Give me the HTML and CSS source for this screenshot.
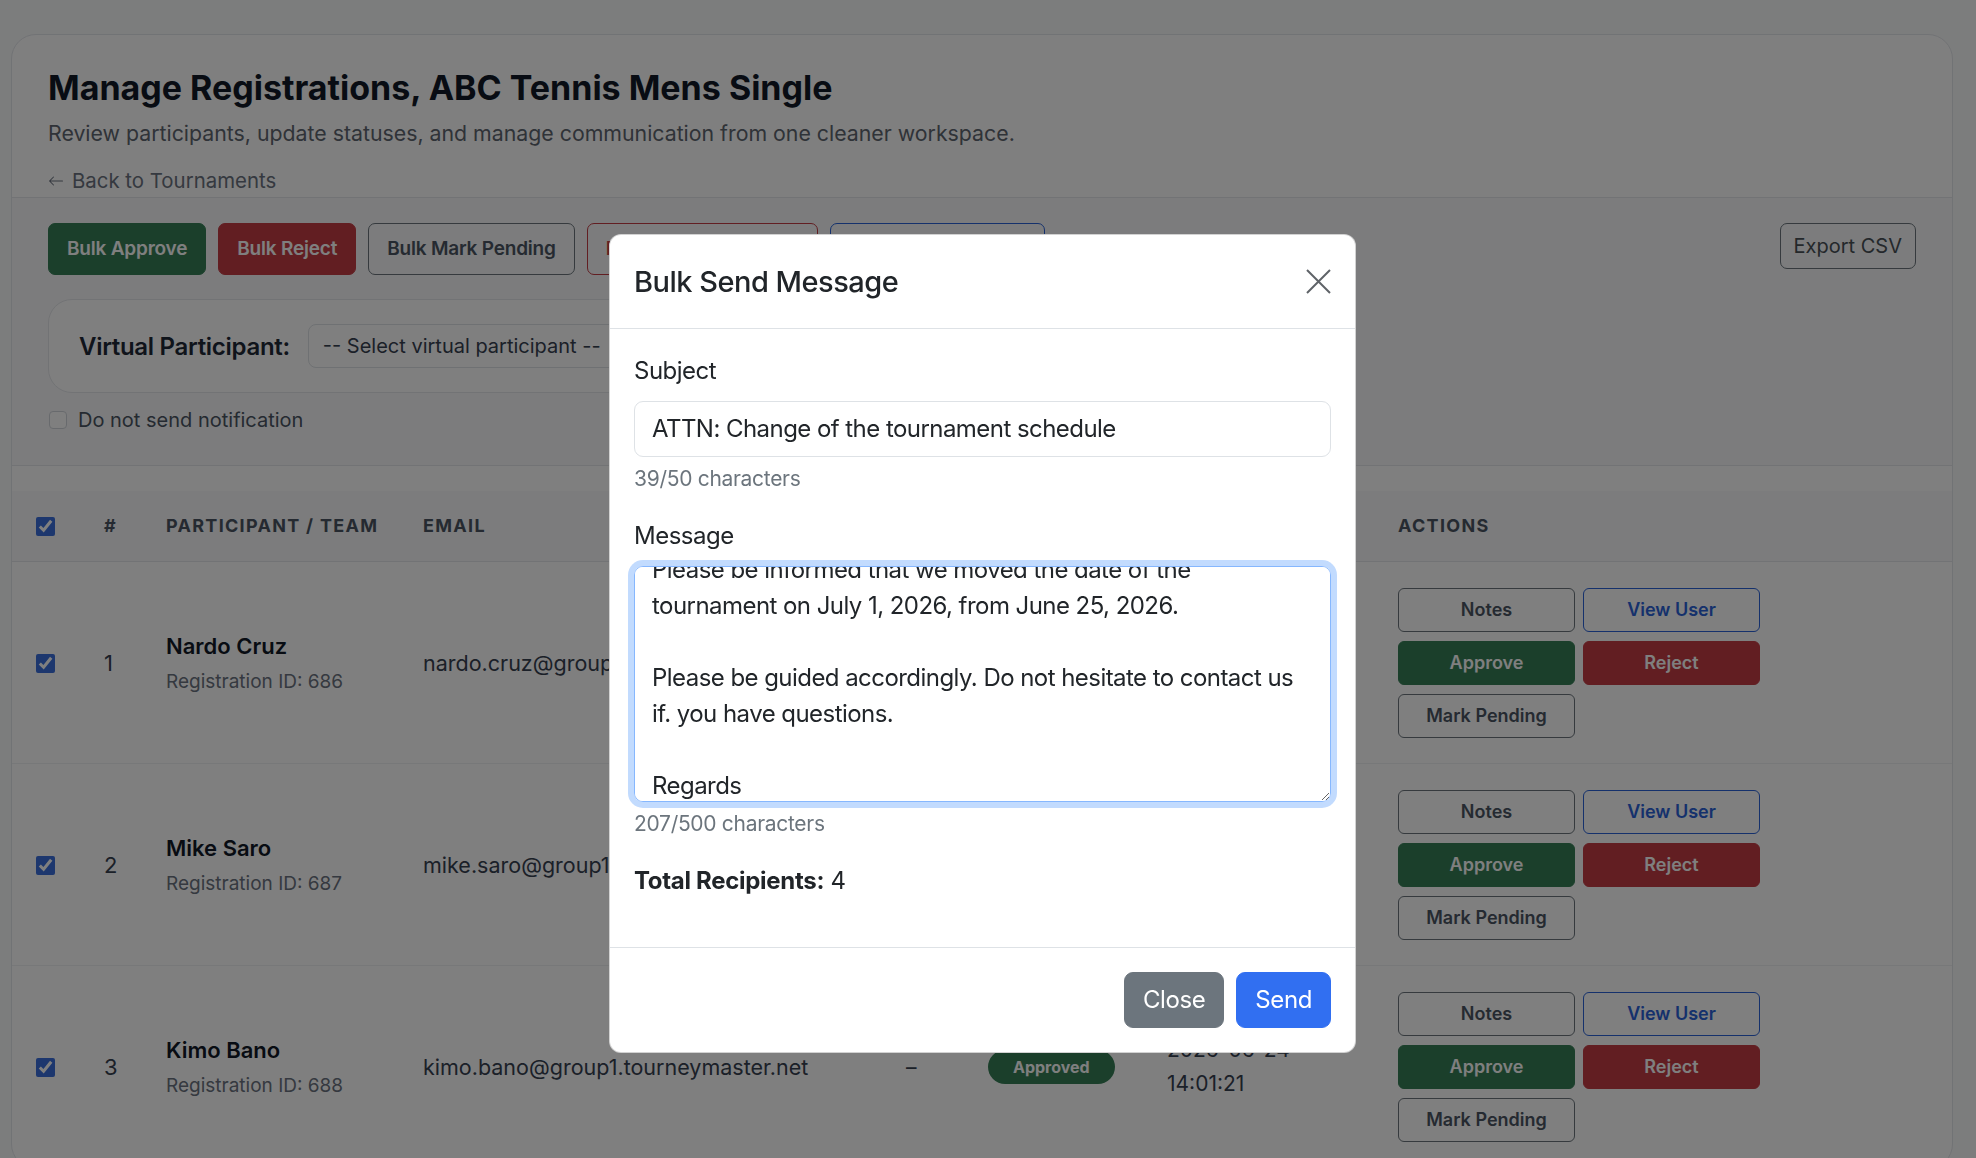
FILE: index.html
```html
<!DOCTYPE html>
<html>
<head>
  <meta charset="utf-8">
  <title>Manage Registrations</title>
  <link rel="stylesheet" href="styles.css">
</head>
<body>
  <div class="card">
    <header class="page-header">
      <h1>Manage Registrations, ABC Tennis Mens Single</h1>
      <p class="lead">Review participants, update statuses, and manage communication from one cleaner workspace.</p>
      <a class="back-link" href="#">
        <svg viewBox="0 0 16 16" fill="currentColor"><path fill-rule="evenodd" d="M15 8a.5.5 0 0 0-.5-.5H2.707l3.147-3.146a.5.5 0 1 0-.708-.708l-4 4a.5.5 0 0 0 0 .708l4 4a.5.5 0 0 0 .708-.708L2.707 8.5H14.5A.5.5 0 0 0 15 8z"/></svg>
        Back to Tournaments
      </a>
    </header>

    <section class="toolbar">
      <div class="bulk-row">
        <div class="bulk-actions">
          <button class="btn btn-success">Bulk Approve</button>
          <button class="btn btn-danger">Bulk Reject</button>
          <button class="btn btn-outline-secondary">Bulk Mark Pending</button>
          <button class="btn btn-outline-danger">Bulk Mark Withdrawn</button>
          <button class="btn btn-outline-primary">Bulk Send Message</button>
        </div>
        <button class="btn btn-export">Export CSV</button>
      </div>
      <div class="virtual-box">
        <label class="virtual-label">Virtual Participant:</label>
        <select class="virtual-select">
          <option>-- Select virtual participant --</option>
        </select>
        <button class="btn btn-outline-primary">Add</button>
      </div>
      <label class="notify">
        <input type="checkbox" class="check-plain">
        Do not send notification
      </label>
    </section>

    <div class="table-wrap">
      <table>
        <colgroup>
          <col style="width: 68px">
          <col style="width: 62px">
          <col style="width: 257px">
          <col style="width: 483px">
          <col style="width: 82px">
          <col style="width: 179px">
          <col style="width: 231px">
          <col>
        </colgroup>
        <thead>
          <tr>
            <th><input type="checkbox" class="check" checked></th>
            <th>#</th>
            <th>Participant / Team</th>
            <th>Email</th>
            <th>Seed</th>
            <th>Status</th>
            <th>Registered</th>
            <th>Actions</th>
          </tr>
        </thead>
        <tbody>
          <tr>
            <td><input type="checkbox" class="check" checked></td>
            <td class="num">1</td>
            <td>
              <div class="name">Nardo Cruz</div>
              <div class="reg-id">Registration ID: 686</div>
            </td>
            <td class="email">nardo.cruz@group1.tourneymaster.net</td>
            <td>–</td>
            <td><span class="badge">Approved</span></td>
            <td class="date"><span>2026-06-24</span><span>13:58:02</span></td>
            <td>
              <div class="actions">
                <button class="btn btn-sm btn-outline-secondary">Notes</button>
                <button class="btn btn-sm btn-outline-primary">View User</button>
                <button class="btn btn-sm btn-success">Approve</button>
                <button class="btn btn-sm btn-danger">Reject</button>
                <button class="btn btn-sm btn-outline-secondary">Mark Pending</button>
              </div>
            </td>
          </tr>
          <tr>
            <td><input type="checkbox" class="check" checked></td>
            <td class="num">2</td>
            <td>
              <div class="name">Mike Saro</div>
              <div class="reg-id">Registration ID: 687</div>
            </td>
            <td class="email">mike.saro@group1.tourneymaster.net</td>
            <td>–</td>
            <td><span class="badge">Approved</span></td>
            <td class="date"><span>2026-06-24</span><span>13:59:47</span></td>
            <td>
              <div class="actions">
                <button class="btn btn-sm btn-outline-secondary">Notes</button>
                <button class="btn btn-sm btn-outline-primary">View User</button>
                <button class="btn btn-sm btn-success">Approve</button>
                <button class="btn btn-sm btn-danger">Reject</button>
                <button class="btn btn-sm btn-outline-secondary">Mark Pending</button>
              </div>
            </td>
          </tr>
          <tr>
            <td><input type="checkbox" class="check" checked></td>
            <td class="num">3</td>
            <td>
              <div class="name">Kimo Bano</div>
              <div class="reg-id">Registration ID: 688</div>
            </td>
            <td class="email">kimo.bano@group1.tourneymaster.net</td>
            <td>–</td>
            <td><span class="badge">Approved</span></td>
            <td class="date"><span>2026-06-24</span><span>14:01:21</span></td>
            <td>
              <div class="actions">
                <button class="btn btn-sm btn-outline-secondary">Notes</button>
                <button class="btn btn-sm btn-outline-primary">View User</button>
                <button class="btn btn-sm btn-success">Approve</button>
                <button class="btn btn-sm btn-danger">Reject</button>
                <button class="btn btn-sm btn-outline-secondary">Mark Pending</button>
              </div>
            </td>
          </tr>
        </tbody>
      </table>
    </div>
  </div>

  <div class="backdrop"></div>

  <div class="modal">
    <div class="modal-header">
      <h2 class="modal-title">Bulk Send Message</h2>
      <button class="btn-close" aria-label="Close">
        <svg viewBox="0 0 25 25"><path d="M1 1L24 24M24 1L1 24" stroke="currentColor" stroke-width="2" fill="none"/></svg>
      </button>
    </div>
    <div class="modal-body">
      <div class="field">
        <label class="form-label" for="subject">Subject</label>
        <input id="subject" class="form-control" type="text" value="ATTN: Change of the tournament schedule">
        <div class="form-text">39/50 characters</div>
      </div>
      <div class="field">
        <label class="form-label" for="message">Message</label>
        <textarea id="message" class="form-control message-input is-focus" rows="6">Please be informed that we moved the date of the tournament on July 1, 2026, from June 25, 2026.

Please be guided accordingly. Do not hesitate to contact us if. you have questions.

Regards
Tournament Admin</textarea>
        <div class="form-text">207/500 characters</div>
      </div>
      <p class="recipients"><strong>Total Recipients:</strong> 4</p>
    </div>
    <div class="modal-footer">
      <button class="btn btn-lg btn-secondary">Close</button>
      <button class="btn btn-lg btn-primary">Send</button>
    </div>
  </div>

  <script src="script.js"></script>
</body>
</html>
```

FILE: styles.css
```css
* {
  box-sizing: border-box;
}
html, body {
  margin: 0;
}
body {
  height: 1158px;
  overflow: hidden;
  padding: 34px 23px 0 11px;
  background: #f9fafb;
  color: #212529;
  font-family: Inter, "Noto Sans", "Liberation Sans", sans-serif;
}
.card {
  background: #fff;
  border: 1px solid #e3e6ea;
  border-radius: 25px;
  overflow: hidden;
}

/* header */
.page-header {
  padding: 32px 36px 1px;
  border-bottom: 1px solid #e5e7eb;
}
.page-header h1 {
  margin: 0 0 10px;
  font-size: 34px;
  line-height: 41px;
  font-weight: 700;
  color: #111827;
}
.lead {
  margin: 0 0 18px;
  font-size: 21.3px;
  line-height: 30px;
  color: #5f6670;
}
.back-link {
  display: inline-flex;
  align-items: center;
  gap: 8px;
  font-size: 20.4px;
  line-height: 30px;
  color: #6b7280;
  text-decoration: none;
}
.back-link svg {
  width: 16px;
  height: 16px;
}

/* buttons */
.btn {
  font-family: inherit;
  font-size: 19px;
  font-weight: 600;
  line-height: 28px;
  letter-spacing: -0.2px;
  padding: 11px 18px;
  border: 1px solid transparent;
  border-radius: 7px;
  background: none;
  white-space: nowrap;
  cursor: pointer;
}
.btn-success {
  background: #367f57;
  border-color: #367f57;
  color: #fff;
}
.btn-danger {
  background: #c43d45;
  border-color: #c43d45;
  color: #fff;
}
.btn-outline-secondary {
  border-color: #6c757d;
  color: #4b5563;
}
.btn-outline-danger {
  border-color: #c43d45;
  color: #c43d45;
}
.btn-outline-primary {
  border-color: #2b63d9;
  color: #2b63d9;
}
.btn-export {
  padding: 8px 13px;
  font-size: 20px;
  font-weight: 400;
  letter-spacing: 0;
  border-color: #6c757d;
  color: #495057;
}
.btn-sm {
  font-size: 18px;
  line-height: 26px;
  letter-spacing: 0;
  padding: 8px;
  border-radius: 6px;
}
.btn-lg {
  font-size: 24px;
  line-height: 36px;
  font-weight: 400;
  letter-spacing: -0.4px;
  padding: 9px 18px;
  border-radius: 9px;
}
.btn-secondary {
  background: #6c757d;
  border-color: #6c757d;
  color: #fff;
}
.btn-primary {
  background: #316ff1;
  border-color: #316ff1;
  color: #fff;
}

/* toolbar */
.toolbar {
  background: #f8f9fa;
  padding: 25px 36px 30px;
  border-bottom: 1px solid #e5e7eb;
}
.bulk-row {
  display: flex;
  justify-content: space-between;
  align-items: flex-start;
}
.bulk-actions {
  display: flex;
  gap: 12px;
}
.virtual-box {
  display: inline-flex;
  align-items: center;
  gap: 18px;
  margin-top: 24px;
  padding: 24px 30px;
  background: #fff;
  border: 1px solid #e5e7eb;
  border-radius: 24px;
}
.virtual-label {
  font-size: 24px;
  font-weight: 600;
  letter-spacing: -0.3px;
  color: #1f2937;
}
.virtual-select {
  appearance: none;
  width: 380px;
  height: 44px;
  padding: 0 14px;
  font-family: inherit;
  font-size: 20px;
  color: #374151;
  background: #fff;
  border: 1px solid #dee2e6;
  border-radius: 8px;
}
.virtual-box .btn {
  padding: 7px 18px;
}
.notify {
  display: flex;
  align-items: center;
  gap: 11px;
  margin-top: 12px;
  font-size: 20px;
  line-height: 30px;
  color: #4b5563;
}
.check-plain {
  appearance: none;
  width: 18px;
  height: 18px;
  margin: 0 0 0 1px;
  background: #fff;
  border: 1px solid #d1d5db;
  border-radius: 4px;
}

/* table */
.table-wrap {
  padding-top: 25px;
}
table {
  width: 100%;
  border-collapse: collapse;
  table-layout: fixed;
}
th {
  background: #f8f9fa;
  text-align: left;
  padding: 23px 24px;
  font-size: 18px;
  line-height: 24px;
  font-weight: 700;
  letter-spacing: 1.3px;
  text-transform: uppercase;
  color: #4b5563;
  border-bottom: 1px solid #e5e7eb;
  white-space: nowrap;
}
td {
  padding: 26px 24px 25px;
  border-bottom: 1px solid #eef0f3;
  vertical-align: middle;
  font-size: 21px;
  color: #374151;
}
.check {
  display: block;
  width: 19px;
  height: 19px;
  margin: 0;
  accent-color: #3a6fdc;
}
.num {
  font-size: 22px;
}
.name {
  font-size: 22px;
  line-height: 32px;
  font-weight: 600;
  color: #111827;
}
.reg-id {
  margin-top: 6px;
  font-size: 19px;
  line-height: 28px;
  color: #6b7280;
}
.email {
  font-size: 21.5px;
  white-space: nowrap;
}
.badge {
  display: inline-block;
  padding: 6px 25px;
  border-radius: 999px;
  background: #367f57;
  color: #fff;
  font-size: 16px;
  line-height: 22px;
  font-weight: 700;
}
.date span {
  display: block;
  font-size: 21px;
  line-height: 34px;
}
.actions {
  display: grid;
  grid-template-columns: 177px 177px;
  gap: 9px 8px;
}

/* modal */
.backdrop {
  position: fixed;
  inset: 0;
  background: rgba(0, 0, 0, 0.5);
}
.modal {
  position: fixed;
  top: 234px;
  left: 609px;
  width: 747px;
  background: #fff;
  border: 1px solid rgba(0, 0, 0, 0.175);
  border-radius: 12px;
  letter-spacing: -0.5px;
}
.modal-header {
  display: flex;
  align-items: center;
  justify-content: space-between;
  padding: 24px;
  border-bottom: 1px solid #dee2e6;
}
.modal-title {
  margin: 0;
  font-size: 29px;
  line-height: 45px;
  font-weight: 500;
  letter-spacing: -0.5px;
}
.btn-close {
  width: 25px;
  height: 25px;
  padding: 0;
  border: 0;
  background: none;
  color: #5f6368;
}
.btn-close svg {
  display: block;
  width: 25px;
  height: 25px;
}
.modal-body {
  padding: 24px;
}
.field {
  margin-bottom: 24px;
}
.form-label {
  display: block;
  margin-bottom: 12px;
  font-size: 24px;
  line-height: 36px;
}
.form-control {
  display: block;
  width: 100%;
  padding: 9px 17px;
  font-family: inherit;
  font-size: 24px;
  line-height: 36px;
  letter-spacing: -0.55px;
  color: #212529;
  background: #fff;
  border: 1px solid #dee2e6;
  border-radius: 9px;
}
.message-input {
  padding-right: 27px;
  resize: vertical;
  scrollbar-width: none;
}
.is-focus {
  border-color: #86b7fe;
  box-shadow: 0 0 0 6px rgba(13, 110, 253, 0.25);
  outline: none;
}
.form-text {
  margin-top: 6px;
  font-size: 21px;
  line-height: 31px;
  letter-spacing: -0.3px;
  color: #6c757d;
}
.recipients {
  margin: 0 0 24px;
  font-size: 24px;
  line-height: 36px;
  letter-spacing: -0.3px;
}
.recipients strong {
  font-weight: 700;
}
.modal-footer {
  display: flex;
  justify-content: flex-end;
  gap: 12px;
  padding: 24px;
  border-top: 1px solid #dee2e6;
}
```

FILE: script.js
```js
document.getElementById('message').scrollTop = 24;
```
